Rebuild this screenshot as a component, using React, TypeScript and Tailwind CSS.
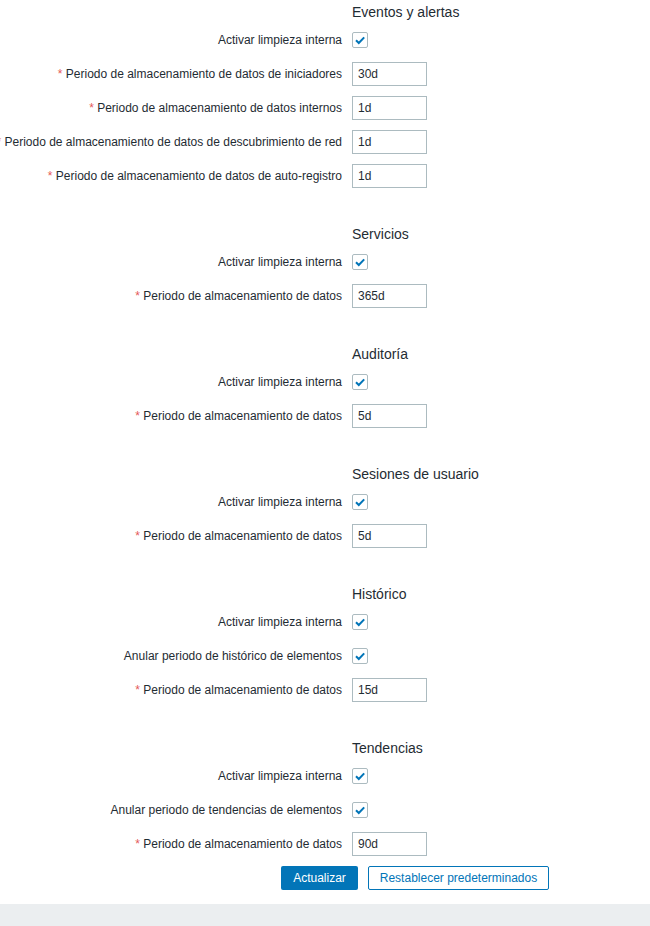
import React from "react";

type Row =
  | { kind: "check"; label: string; required?: boolean }
  | { kind: "input"; label: string; value: string; required?: boolean };

type Section = { title: string; rows: Row[] };

const sections: Section[] = [
  {
    title: "Eventos y alertas",
    rows: [
      { kind: "check", label: "Activar limpieza interna" },
      { kind: "input", label: "Periodo de almacenamiento de datos de iniciadores", value: "30d", required: true },
      { kind: "input", label: "Periodo de almacenamiento de datos internos", value: "1d", required: true },
      { kind: "input", label: "Periodo de almacenamiento de datos de descubrimiento de red", value: "1d", required: true },
      { kind: "input", label: "Periodo de almacenamiento de datos de auto-registro", value: "1d", required: true },
    ],
  },
  {
    title: "Servicios",
    rows: [
      { kind: "check", label: "Activar limpieza interna" },
      { kind: "input", label: "Periodo de almacenamiento de datos", value: "365d", required: true },
    ],
  },
  {
    title: "Auditoría",
    rows: [
      { kind: "check", label: "Activar limpieza interna" },
      { kind: "input", label: "Periodo de almacenamiento de datos", value: "5d", required: true },
    ],
  },
  {
    title: "Sesiones de usuario",
    rows: [
      { kind: "check", label: "Activar limpieza interna" },
      { kind: "input", label: "Periodo de almacenamiento de datos", value: "5d", required: true },
    ],
  },
  {
    title: "Histórico",
    rows: [
      { kind: "check", label: "Activar limpieza interna" },
      { kind: "check", label: "Anular periodo de histórico de elementos" },
      { kind: "input", label: "Periodo de almacenamiento de datos", value: "15d", required: true },
    ],
  },
  {
    title: "Tendencias",
    rows: [
      { kind: "check", label: "Activar limpieza interna" },
      { kind: "check", label: "Anular periodo de tendencias de elementos" },
      { kind: "input", label: "Periodo de almacenamiento de datos", value: "90d", required: true },
    ],
  },
];

function Checkbox() {
  return (
    <div className="w-[16px] h-[16px] border border-[#acbbc0] rounded-[2px] bg-white flex items-center justify-center">
      <svg width="12" height="12" viewBox="0 0 12 12">
        <path d="M2 6.2 L4.8 9 L10.2 3.4" fill="none" stroke="#0275b8" strokeWidth="2" />
      </svg>
    </div>
  );
}

function FormRow({ row }: { row: Row }) {
  return (
    <div className="flex items-center h-[24px]">
      <div className="w-[342px] shrink-0 flex justify-end items-center whitespace-nowrap text-[12px] text-[#1f2c33]">
        <span>
          {row.required && <span className="text-[#e45959]">* </span>}
          {row.label}
        </span>
      </div>
      <div className="ml-[10px] flex items-center">
        {row.kind === "check" ? (
          <Checkbox />
        ) : (
          <div className="w-[75px] h-[24px] border border-[#acbbc0] bg-white pl-[5px] flex items-center text-[12px] text-[#1f2c33]">
            {row.value}
          </div>
        )}
      </div>
    </div>
  );
}

export default function App() {
  return (
    <div
      className="w-[650px] h-[926px] bg-white flex flex-col overflow-hidden"
      style={{ fontFamily: '"Liberation Sans", Arial, sans-serif' }}
    >
      <div className="flex flex-col gap-[34px] pb-[14px]">
        {sections.map((s) => (
          <div key={s.title} className="flex flex-col">
            <div className="h-[24px] flex items-center pl-[352px] text-[14px] text-[#1f2c33] whitespace-nowrap">
              {s.title}
            </div>
            <div className="flex flex-col gap-[10px] mt-[4px]">
              {s.rows.map((r, i) => (
                <FormRow key={i} row={r} />
              ))}
            </div>
          </div>
        ))}
      </div>
      <div className="flex gap-[10px] pl-[281px] -mt-[4px]">
        <button className="w-[77px] h-[24px] bg-[#0275b8] rounded-[2px] text-white text-[12px]">
          Actualizar
        </button>
        <button className="w-[181px] h-[24px] bg-white border border-[#0275b8] rounded-[2px] text-[#0275b8] text-[12px]">
          Restablecer predeterminados
        </button>
      </div>
      <div className="mt-[14px] flex-1 bg-[#ebeef0]" />
    </div>
  );
}
